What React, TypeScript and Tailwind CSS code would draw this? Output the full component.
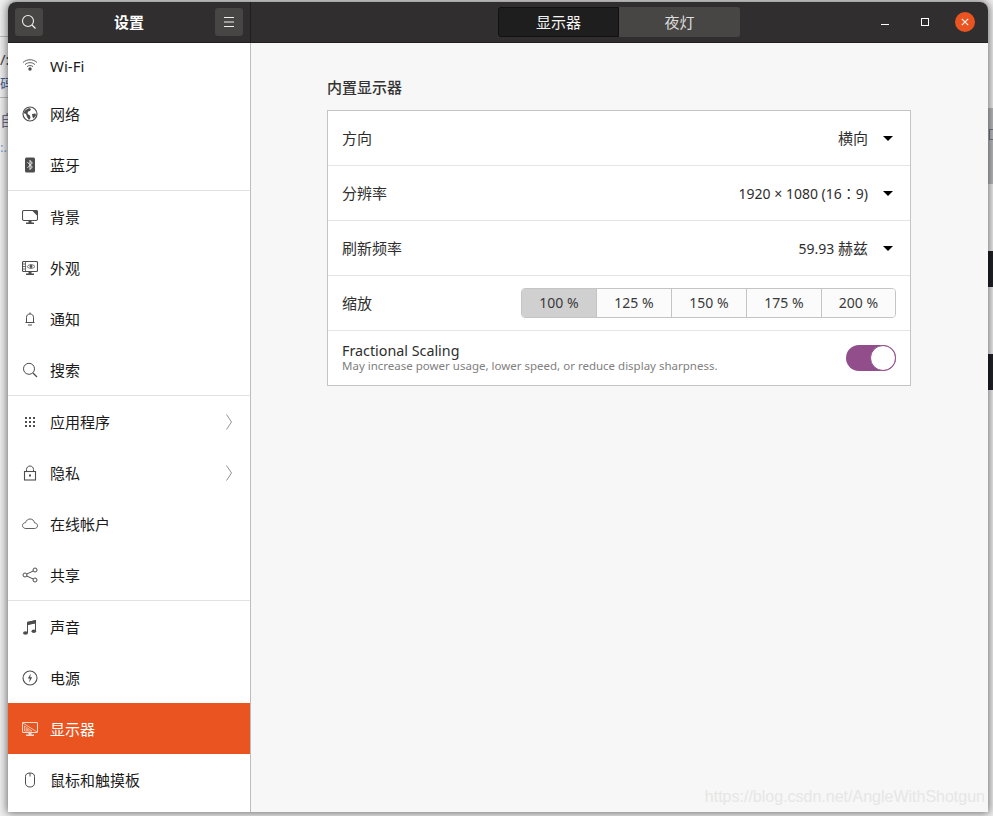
import type { ReactNode } from "react";

const cjk = "font-['Noto_Sans','Noto_Sans_CJK_SC',sans-serif]";

function Ico({ children, className = "" }: { children: ReactNode; className?: string }) {
  return (
    <svg viewBox="0 0 16 16" className={`h-4 w-4 shrink-0 ${className}`} fill="none" stroke="currentColor" strokeWidth="1">
      {children}
    </svg>
  );
}

const icons: Record<string, ReactNode> = {
  wifi: (
    <>
      <path d="M1 5.500C5 1.800 11 1.800 15 5.500M3 7.600C6 5 10 5 13 7.600M5 9.600C6.800 8.200 9.200 8.200 11 9.600" strokeWidth="0.900" />
      <circle cx="8" cy="12" r="1.700" fill="currentColor" stroke="none" />
    </>
  ),
  globe: (
    <>
      <circle cx="8" cy="8" r="7" strokeWidth="1.200" />
      <path d="M3 4.500 7 2l2 1-1 2-2 .5-.5 2L7 9l1 .5.5 2.500L7 14 5 11 4 8 1.500 7ZM10 8l3.500-.5.5 2-2.500 3-1-1.500Z" fill="currentColor" stroke="none" />
    </>
  ),
  bluetooth: (
    <>
      <rect x="3" y="0.500" width="10" height="15" rx="1.500" fill="currentColor" stroke="none" />
      <path d="M5.500 5.200 10.300 10 8 12.600V3.400L10.300 6 5.500 10.800" stroke="#fff" strokeWidth="0.900" />
    </>
  ),
  background: (
    <>
      <rect x="0.500" y="1.500" width="15" height="10" rx="1.500" strokeWidth="1.100" />
      <path d="M10 1.500h5.500V7Z" fill="currentColor" stroke="none" />
      <path d="M6.500 12h3v1.500h2.500V15h-8v-1.500h2.500Z" fill="currentColor" stroke="none" />
    </>
  ),
  appearance: (
    <>
      <rect x="0.500" y="1.500" width="15" height="10" rx="1" strokeWidth="1.100" />
      <path d="M3.500 1.500v10M.5 4h3M.5 6.500h3M.5 9h3" strokeWidth="0.800" />
      <path d="M5 6.500C7 4 11 4 13 6.500 11 9 7 9 5 6.500Z" strokeWidth="0.800" />
      <circle cx="9" cy="6.500" r="1.400" fill="currentColor" stroke="none" />
      <path d="M6.500 12h3v1.500h2.500V15h-8v-1.500h2.500Z" fill="currentColor" stroke="none" />
    </>
  ),
  bell: (
    <>
      <path d="M4.500 11.500V6.500C4.500 4 6 3 8 3s3.500 1 3.500 3.500v5ZM3.500 11.500h9" strokeWidth="1" />
      <path d="M7.500 1.500h1v1.500h-1ZM6 13.500h4V14.500H6Z" fill="currentColor" stroke="none" />
    </>
  ),
  search: (
    <>
      <circle cx="7" cy="6.800" r="5.500" strokeWidth="1" />
      <path d="m11 11 4 4" strokeWidth="1.200" />
    </>
  ),
  grid: (
    <g fill="currentColor" stroke="none">
      {[3, 7, 11].flatMap((y) =>
        [3, 7, 11].map((x) => <rect key={`${x}-${y}`} x={x} y={y} width="2" height="2" />)
      )}
    </g>
  ),
  lock: (
    <>
      <rect x="2.500" y="6.500" width="11" height="8.500" strokeWidth="1.100" />
      <path d="M4.500 6.500V4.500C4.500 2.500 6 1 8 1s3.500 1.500 3.500 3.500v2" strokeWidth="1" />
      <rect x="7" y="9.500" width="2" height="2" fill="currentColor" stroke="none" />
    </>
  ),
  cloud: <path d="M4 12.500C2 12.500.5 11.300.5 9.500S2 6.700 3.500 6.700C4 4.500 6 3 8 3c2.500 0 4 1.500 4.500 3.800 1.700.2 3 1.300 3 2.900 0 1.700-1.300 2.800-3 2.800Z" strokeWidth="0.900" />,
  share: (
    <>
      <circle cx="13" cy="3" r="2" />
      <circle cx="13" cy="13" r="2" />
      <circle cx="3" cy="8" r="2" />
      <path d="M4.800 7 11.200 4M4.800 9l6.400 3" />
    </>
  ),
  music: (
    <g fill="currentColor" stroke="none">
      <path d="M5 3 14 1V12h-1V4.500L6 6V14H5Z" />
      <ellipse cx="3.500" cy="14" rx="2.500" ry="1.700" />
      <ellipse cx="11.800" cy="12.300" rx="2.300" ry="1.700" />
      <path d="M5 3 14 1v3L5 6Z" />
    </g>
  ),
  power: (
    <>
      <circle cx="8" cy="8" r="7" strokeWidth="1.100" />
      <path d="M8.800 3.500 5.800 8.500h2l-.6 4 3-5.200h-2Z" fill="currentColor" stroke="none" />
    </>
  ),
  display: (
    <>
      <rect x="0.500" y="1.500" width="15" height="10" rx="1" strokeWidth="1.100" />
      <path d="M1 2 15 11" strokeWidth="0.800" />
      <path d="M2.500 5v5h7.500ZM4 7.500v1.500h2.500Z" strokeWidth="0.700" />
      <path d="M6.500 12h3v1.500h2.500V15h-8v-1.500h2.500Z" fill="currentColor" stroke="none" />
    </>
  ),
  mouse: <path d="M8 1c3 0 4.500 1.300 4.500 3.500v6.500c0 2.600-1.800 4-4.500 4s-4.500-1.400-4.500-4V4.500C3.500 2.300 5 1 8 1ZM8 1v3.500" strokeWidth="1" />,
};

type Item = { icon: string; label: string; chevron?: boolean; active?: boolean; lowered?: boolean };

const groups: Item[][] = [
  [
    { icon: "wifi", label: "Wi-Fi", lowered: true },
    { icon: "globe", label: "网络" },
    { icon: "bluetooth", label: "蓝牙" },
  ],
  [
    { icon: "background", label: "背景" },
    { icon: "appearance", label: "外观" },
    { icon: "bell", label: "通知" },
    { icon: "search", label: "搜索" },
  ],
  [
    { icon: "grid", label: "应用程序", chevron: true },
    { icon: "lock", label: "隐私", chevron: true },
    { icon: "cloud", label: "在线帐户" },
    { icon: "share", label: "共享" },
  ],
  [
    { icon: "music", label: "声音" },
    { icon: "power", label: "电源" },
    { icon: "display", label: "显示器", active: true },
    { icon: "mouse", label: "鼠标和触摸板" },
  ],
];

function SidebarRow({ item }: { item: Item }) {
  return (
    <div
      className={`flex h-[51px] items-center gap-3 pl-[14px] pr-[18px] text-[15px] ${
        item.active ? "bg-[#e95420] text-white" : "text-[#1a1a1a]"
      } ${item.lowered ? "pt-[5px]" : ""}`}
    >
      <Ico className={item.active ? "text-[#f7d9cd]" : "text-[#4d4d4d]"}>{icons[item.icon]}</Ico>
      <span className="flex-1 pt-[2px]">{item.label}</span>
      {item.chevron && (
        <svg viewBox="0 0 6 16" className="h-4 w-[6px] text-[#777]" fill="none" stroke="currentColor" strokeWidth="0.800">
          <path d="m.5 .5 5 7.500-5 7.500" />
        </svg>
      )}
    </div>
  );
}

function SettingRow({ label, children }: { label: string; children: ReactNode }) {
  return (
    <div className="flex h-[55px] items-center justify-between border-b border-[#e4e4e4] pl-[14px] pr-[17px] text-[15px] text-[#2e2e2e]">
      <span className="pt-px">{label}</span>
      <span className="flex items-center gap-[15px]">
        <span className="pt-px">{children}</span>
        <span className="h-0 w-0 border-x-[5px] border-t-[5px] border-x-transparent border-t-black" />
      </span>
    </div>
  );
}

export default function App() {
  return (
    <div className={`relative h-[816px] w-[993px] overflow-hidden bg-[#eeeeee] ${cjk}`}>
      {/* what shows of the windows behind */}
      <div className="absolute left-0 top-[36px] h-px w-2 bg-[#bbb]" />
      <div className="absolute left-0 top-[97px] h-px w-2 bg-[#bbb]" />
      <div className="absolute left-0 top-[52px] text-[15px] leading-none text-[#444]">/:</div>
      <div className="absolute left-0 top-[77px] text-[13px] leading-none text-[#3f5f99]">码</div>
      <div className="absolute left-0 top-[113px] text-[15px] leading-none text-[#6c6c88]">自</div>
      <div className="absolute left-0 top-[141px] text-[13px] leading-none text-[#6aa0d8]">:.</div>
      <div className="absolute right-0 top-[108px] h-[76px] w-[5px] bg-[#b9bbbd]" />
      <div className="absolute right-0 top-[129px] h-[11px] w-[4px] border-y border-l border-[#77778a]" />
      <div className="absolute right-0 top-[251px] h-9 w-[5px] bg-[#1f2126]" />
      <div className="absolute right-0 top-[354px] h-9 w-[5px] bg-[#1f2126]" />

      {/* window */}
      <div className="absolute left-2 top-[2px] flex h-[810px] w-[980px] flex-col overflow-hidden rounded-t-[8px] shadow-[0_0_8px_1px_rgba(0,0,0,0.55)]">
        <header className="flex h-[41px] shrink-0 border-b border-[#1f1e1e] bg-[#302e2e] text-white">
          <div className="flex w-[243px] items-center justify-between border-r border-[#1f1e1e] px-[7px]">
            <button className="flex h-7 w-7 items-center justify-center rounded-[3px] bg-[#484644] text-[#f0f0f0]">
              <Ico>
                <circle cx="7" cy="7" r="5.500" strokeWidth="1.100" />
                <path d="m11 11 3.500 3.500" strokeWidth="1.300" />
              </Ico>
            </button>
            <span className="text-[15px] font-bold">设置</span>
            <button className="flex h-7 w-7 items-center justify-center rounded-[3px] bg-[#484644] text-[#f0f0f0]">
              <Ico>
                <path d="M3 3.500h10M3 8h10M3 12.500h10" />
              </Ico>
            </button>
          </div>
          <div className="relative flex flex-1 items-center justify-end pr-[13px]">
            <div className="absolute left-[247px] flex h-[30px] text-[15px]">
              <span className="flex w-[121px] items-center justify-center rounded-l-[3px] border border-[#111] bg-[#1f1e1e] text-[#f4f4f4]">显示器</span>
              <span className="flex w-[121px] items-center justify-center rounded-r-[3px] bg-[#484644] text-[#dedede]">夜灯</span>
            </div>
            <div className="flex items-center">
              <span className="mr-[32px] mt-[5px] h-px w-2 bg-white" />
              <span className="mr-[26px] h-2 w-2 border border-white" />
              <span className="flex h-5 w-5 items-center justify-center rounded-full bg-[#e95420]">
                <svg viewBox="0 0 10 10" className="h-2 w-2" stroke="#fff" strokeWidth="1.300">
                  <path d="m1 1 8 8M9 1 1 9" />
                </svg>
              </span>
            </div>
          </div>
        </header>

        <div className="flex min-h-0 flex-1">
          <aside className="h-full w-[243px] shrink-0 overflow-hidden border-r border-[#bdbdbd] bg-white">
            <div className="-mt-[6px]">
              {groups.map((group, i) => (
                <div key={i} className={i > 0 ? "border-t border-[#e2e2e2]" : ""}>
                  {group.map((item) => (
                    <SidebarRow key={item.label} item={item} />
                  ))}
                </div>
              ))}
            </div>
          </aside>

          <main className="flex-1 bg-[#f7f7f7] pl-[76px] pt-[34px]">
            <h2 className="mb-[13px] text-[15px] font-medium leading-5 text-[#333]">内置显示器</h2>
            <div className="w-[584px] border border-[#c4c4c4] bg-white">
              <SettingRow label="方向">横向</SettingRow>
              <SettingRow label="分辨率">
                <span className="text-[14px]">
                  1920 × 1080 (16<span className="font-['Noto_Sans_CJK_TC',sans-serif]">：</span>9)
                </span>
              </SettingRow>
              <SettingRow label="刷新频率">
                <span className="text-[14px]">59.93 </span>赫兹
              </SettingRow>
              <div className="flex h-[55px] items-center justify-between border-b border-[#e4e4e4] px-[14px] text-[15px] text-[#2e2e2e]">
                <span className="pt-px">缩放</span>
                <div className="flex h-[30px] w-[375px] overflow-hidden rounded-[4px] border border-[#c4c4c4] text-[14px] text-[#3a3a3a]">
                  {["100 %", "125 %", "150 %", "175 %", "200 %"].map((v, i) => (
                    <span
                      key={v}
                      className={`flex items-center justify-center pb-[2px] ${
                        i === 0 ? "w-[74px] bg-[#d0d0d0]" : i === 4 ? "flex-1 border-l border-[#c4c4c4] bg-[#fbfbfb]" : "w-[75px] border-l border-[#c4c4c4] bg-[#fbfbfb]"
                      }`}
                    >
                      {v}
                    </span>
                  ))}
                </div>
              </div>
              <div className="flex h-[54px] items-center justify-between px-[14px]">
                <div>
                  <div className="text-[14.300px] leading-[16px] text-[#2e2e2e]">Fractional Scaling</div>
                  <div className="text-[11.500px] leading-[14px] text-[#808080]">May increase power usage, lower speed, or reduce display sharpness.</div>
                </div>
                <div className="flex h-[26px] w-[50px] justify-end rounded-full bg-[#924d8b]">
                  <span className="h-[26px] w-[26px] rounded-full border border-[#924d8b] bg-white" />
                </div>
              </div>
            </div>
          </main>
        </div>
      </div>

      <div className="pointer-events-none absolute right-[8px] top-[788px] font-['Liberation_Sans',sans-serif] text-[16px] leading-[18px] text-[#e6e6e6]">
        https://blog.csdn.net/AngleWithShotgun
      </div>
    </div>
  );
}
